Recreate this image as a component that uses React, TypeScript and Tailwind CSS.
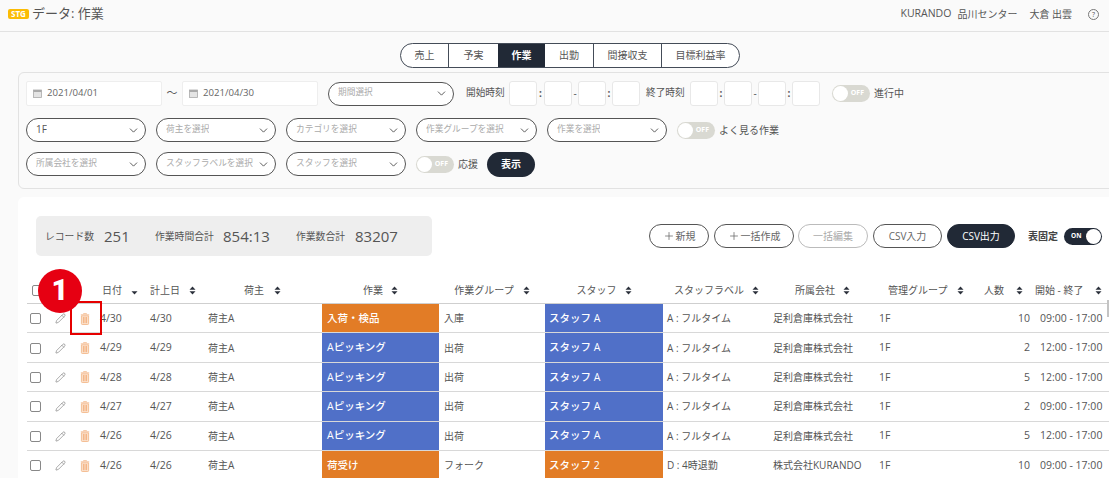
import React from "react";
import { Pencil, ChevronDown, Plus } from "lucide-react";

const Chev = () => <ChevronDown size={13} strokeWidth={1.6} className="text-[#444] shrink-0" />;

function Select({ label, w, dark, className = "" }: { label: string; w: string; dark?: boolean; className?: string }) {
  return (
    <div className={`${w} h-[24px] rounded-full border border-[#555] bg-white flex items-center justify-between pl-[9px] pr-[5px] ${dark ? "text-[10px] text-[#555]" : "text-[8.7px] text-[#aaa]"} ${className}`}>
      <span className="truncate pb-[1px]">{label}</span>
      <Chev />
    </div>
  );
}

function Toggle({ on, className = "" }: { on?: boolean; className?: string }) {
  return on ? (
    <div className={`w-[38px] h-[17px] rounded-full bg-[#212936] flex items-center justify-between pl-[7px] pr-[1px] ${className}`}>
      <span className="text-[6.5px] font-bold text-white">ON</span>
      <span className="w-[15px] h-[15px] rounded-full bg-white" />
    </div>
  ) : (
    <div className={`w-[38px] h-[17px] rounded-full bg-[#d9d9d2] flex items-center justify-between pl-[1px] pr-[6px] ${className}`}>
      <span className="w-[15px] h-[15px] rounded-full bg-white" />
      <span className="text-[7px] font-bold text-white">OFF</span>
    </div>
  );
}

const Cal = () => (
  <svg width="9" height="9" viewBox="0 0 9 9" className="shrink-0">
    <rect x="0.5" y="1" width="8" height="7.5" fill="#e4e4e4" stroke="#aaa" strokeWidth="0.8" />
    <rect x="0.5" y="1" width="8" height="2" fill="#aaa" />
  </svg>
);

function DateBox({ v, w = "w-[136px]" }: { v: string; w?: string }) {
  return (
    <div className={`${w} h-[25px] rounded-[2px] border border-[#eee] bg-white flex items-center gap-[5px] pl-[6px] text-[9.6px] text-[#666]`}>
      <Cal />
      {v}
    </div>
  );
}

const TimeBox = ({ w = "w-[28px]" }: { w?: string }) => <div className={`${w} h-[25px] rounded-[3px] border border-[#e8e8e8] bg-white`} />;

const Sort = ({ downOnly }: { downOnly?: boolean }) => (
  <svg width="7" height="9" viewBox="0 0 7 9" className="inline-block shrink-0">
    {!downOnly && <path d="M3.5 0.5 L6.5 3.8 H0.5 Z" fill="#2a2f3a" />}
    <path d="M3.5 8.5 L6.5 5.2 H0.5 Z" fill="#2a2f3a" />
  </svg>
);

const Trash = () => (
  <svg width="10" height="12" viewBox="0 0 10 12" className="inline-block">
    <path d="M3.5 1.2 V0.6 H6.5 V1.2 M0.8 1.8 H9.2" stroke="#f4bd94" strokeWidth="0.9" fill="none" />
    <path d="M1.4 2.8 H8.6 V10.6 Q8.6 11.5 7.7 11.5 H2.3 Q1.4 11.5 1.4 10.6 Z" fill="#fbe4d2" stroke="#f3b27f" strokeWidth="0.8" />
    <path d="M3.4 4 V10.2 M5 4 V10.2 M6.6 4 V10.2" stroke="#f2ac76" strokeWidth="0.9" />
  </svg>
);

const Btn = ({ children, w, muted, dark, className = "" }: { children: React.ReactNode; w: string; muted?: boolean; dark?: boolean; className?: string }) => (
  <div className={`${w} h-[24px] rounded-full border flex items-center justify-center text-[10px] ${dark ? "bg-[#212936] border-[#212936] text-white" : muted ? "bg-white border-[#bbb] text-[#aaa]" : "bg-white border-[#555] text-[#666]"} ${className}`}>
    {children}
  </div>
);

const tabs = [
  ["売上", "w-[48px]"],
  ["予実", "w-[49px]"],
  ["作業", "w-[47px]"],
  ["出勤", "w-[49px]"],
  ["間接収支", "w-[68px]"],
  ["目標利益率", "w-[77px]"],
];

const BLUE = "bg-[#5070c8]";
const ORANGE = "bg-[#e27c26]";

const rows = [
  ["4/30", "入荷・検品", ORANGE, "入庫", "スタッフ A", BLUE, "A : フルタイム", "足利倉庫株式会社", "10", "09:00 - 17:00"],
  ["4/29", "Aピッキング", BLUE, "出荷", "スタッフ A", BLUE, "A : フルタイム", "足利倉庫株式会社", "2", "12:00 - 17:00"],
  ["4/28", "Aピッキング", BLUE, "出荷", "スタッフ A", BLUE, "A : フルタイム", "足利倉庫株式会社", "5", "12:00 - 17:00"],
  ["4/27", "Aピッキング", BLUE, "出荷", "スタッフ A", BLUE, "A : フルタイム", "足利倉庫株式会社", "2", "09:00 - 17:00"],
  ["4/26", "Aピッキング", BLUE, "出荷", "スタッフ A", BLUE, "A : フルタイム", "足利倉庫株式会社", "5", "12:00 - 17:00"],
  ["4/26", "荷受け", ORANGE, "フォーク", "スタッフ 2", ORANGE, "D : 4時退勤", "株式会社KURANDO", "10", "09:00 - 17:00"],
];

const headers: [string, number, string][] = [
  ["日付", 49, "pl-[6px] gap-[9px]"],
  ["計上日", 59, "pl-[5px] gap-[9px]"],
  ["荷主", 118, "pl-[40px] gap-[10px]"],
  ["作業", 117, "justify-center gap-[8px]"],
  ["作業グループ", 106, "justify-center gap-[9px]"],
  ["スタッフ", 118, "justify-center gap-[8px]"],
  ["スタッフラベル", 107, "justify-center gap-[8px]"],
  ["所属会社", 105, "justify-center gap-[8px]"],
  ["管理グループ", 85, "pl-[13px] gap-[10px]"],
  ["人数", 70, "pl-[24px] gap-[12px]"],
  ["開始 - 終了", 80, "pl-[5px] gap-[12px]"],
];

export default function App() {
  return (
    <div className="relative w-[1109px] h-[478px] overflow-hidden bg-[#fafafa] text-[#555] font-['Open_Sans','Noto_Sans_CJK_JP',sans-serif]">
      {/* top bar */}
      <header className="h-[32px] border-b border-[#e2e2e2] flex items-center pl-[8px] pr-[10px] pb-[3px]">
        <span className="w-[21px] h-[10px] rounded-[2px] bg-[#fbbc05] text-white text-[8px] font-bold flex items-center justify-center leading-none">STG</span>
        <span className="ml-[3px] text-[13px] text-[#555]">データ: 作業</span>
        <div className="ml-auto flex items-center text-[10px] text-[#555]">
          <span className="text-[10.5px]">KURANDO</span>
          <span className="ml-[6px]">品川センター</span>
          <span className="ml-[12px]">大倉 出雲</span>
          <span className="ml-[16px] w-[11px] h-[11px] rounded-full border border-[#777] text-[7px] flex items-center justify-center leading-none">?</span>
        </div>
      </header>

      {/* tabs */}
      <div className="h-[40px] pt-[9px] pl-[400px]">
        <div className="inline-flex h-[25px] rounded-full border border-[#444c58] bg-white overflow-hidden">
          {tabs.map(([t, w], i) => (
            <div key={t} className={`${w} flex items-center justify-center text-[10px] ${i === 2 ? "bg-[#212936] text-white font-bold" : "text-[#555]"} ${i < 5 && i !== 1 && i !== 2 ? "border-r border-[#444c58]" : ""}`}>
              {t}
            </div>
          ))}
        </div>
      </div>

      {/* filter panel */}
      <section className="ml-[18px] w-[1110px] h-[117px] rounded-[6px] border border-[#e2e2e2] pl-[7px] pt-[8px]">
        <div className="flex items-center h-[25px]">
          <DateBox v="2021/04/01" />
          <span className="w-[20px] text-center text-[11px]">〜</span>
          <DateBox v="2021/04/30" />
          <Select label="期間選択" w="w-[126px]" className="ml-[10px]" />
          <span className="ml-[12px] w-[43px] text-[9.7px]">開始時刻</span>
          <TimeBox />
          <span className="w-[7px] text-center text-[10px] font-bold">:</span>
          <TimeBox />
          <span className="w-[6px] text-center text-[10px]">-</span>
          <TimeBox />
          <span className="w-[6px] text-center text-[10px] font-bold">:</span>
          <TimeBox />
          <span className="ml-[6px] w-[44px] text-[9.7px]">終了時刻</span>
          <TimeBox />
          <span className="w-[6px] text-center text-[10px] font-bold">:</span>
          <TimeBox />
          <span className="w-[6px] text-center text-[10px]">-</span>
          <TimeBox />
          <span className="w-[6px] text-center text-[10px] font-bold">:</span>
          <TimeBox />
          <Toggle className="ml-[12px]" />
          <span className="ml-[4px] text-[10px]">進行中</span>
        </div>
        <div className="flex items-center h-[24px] mt-[12px] gap-[10px]">
          <Select label="1F" w="w-[120px]" dark />
          <Select label="荷主を選択" w="w-[120px]" />
          <Select label="カテゴリを選択" w="w-[120px]" />
          <Select label="作業グループを選択" w="w-[121px]" />
          <Select label="作業を選択" w="w-[120px]" />
          <div className="flex items-center gap-[4px]">
            <Toggle />
            <span className="text-[10px]">よく見る作業</span>
          </div>
        </div>
        <div className="flex items-center h-[24px] mt-[10px] gap-[10px]">
          <Select label="所属会社を選択" w="w-[120px]" />
          <Select label="スタッフラベルを選択" w="w-[120px]" />
          <Select label="スタッフを選択" w="w-[120px]" />
          <div className="flex items-center gap-[4px]">
            <Toggle />
            <span className="text-[10px]">応援</span>
          </div>
          <div className="ml-[-1px] w-[48px] h-[25px] rounded-full bg-[#212936] text-white text-[10px] font-bold flex items-center justify-center">表示</div>
        </div>
      </section>

      {/* main card */}
      <section className="ml-[18px] mt-[8px] w-[1110px] h-[300px] bg-white rounded-t-[6px] pt-[19px]">
        <div className="flex items-start pl-[18px]">
          <div className="w-[396px] h-[40px] rounded-[5px] bg-[#eeeeee] flex items-center pl-[9px] text-[#555]">
            <span className="text-[9.8px] w-[59px] pt-[2px]">レコード数</span>
            <span className="text-[15px] w-[51px]">251</span>
            <span className="text-[9.8px] w-[68px] pt-[2px]">作業時間合計</span>
            <span className="text-[15px] w-[73px]">854:13</span>
            <span className="text-[9.8px] w-[59px] pt-[2px]">作業数合計</span>
            <span className="text-[15px]">83207</span>
          </div>
          <div className="ml-[217px] mt-[8px] flex items-center">
            <Btn w="w-[60px]"><Plus size={12} strokeWidth={1.5} className="mr-[1px]" />新規</Btn>
            <Btn w="w-[80px]" className="ml-[5px]"><Plus size={12} strokeWidth={1.5} className="mr-[1px]" />一括作成</Btn>
            <Btn w="w-[70px]" muted className="ml-[4px]">一括編集</Btn>
            <Btn w="w-[69px]" className="ml-[5px]">CSV入力</Btn>
            <Btn w="w-[68px]" dark className="ml-[5px]">CSV出力</Btn>
            <span className="ml-[13px] text-[10px] font-bold text-[#444] w-[36px]">表固定</span>
            <Toggle on />
          </div>
        </div>

        {/* table */}
        <div className="ml-[9px] mt-[22px] text-[10.5px] text-[#555]">
          <div className="flex h-[26px] border-b border-[#cfcfcf]">
            <div className="w-[18px] flex items-center pl-[5px]">
              <span className="w-[11px] h-[11px] rounded-[2px] border border-[#888] bg-white" />
            </div>
            <div className="w-[51px]" />
            {headers.map(([h, w, cls], i) => (
              <div key={h} style={{ width: w }} className={`shrink-0 flex items-center ${cls}`}>
                <span className="text-[10px] whitespace-nowrap">{h}</span>
                <Sort downOnly={i === 0} />
              </div>
            ))}
          </div>
          {rows.map((r, idx) => (
            <div key={idx} className="flex h-[29.4px] border-b border-[#d8d8d8] items-stretch [&>div]:pt-[1px]">
              <div className="w-[18px] flex items-center pl-[3px]">
                <span className="w-[11px] h-[11px] rounded-[2px] border border-[#888] bg-white" />
              </div>
              <div className="w-[27px] flex items-center justify-center pl-[3px]">
                <Pencil size={11} strokeWidth={1.2} className="text-[#666]" />
              </div>
              <div className="w-[24px] flex items-center justify-center pl-[2px]">
                <Trash />
              </div>
              <div className="w-[49px] flex items-center pl-[4px]">{r[0]}</div>
              <div className="w-[59px] flex items-center pl-[5px]">{r[0]}</div>
              <div className="w-[118px] flex items-center pl-[4px] text-[10px]">荷主A</div>
              <div className={`w-[117px] flex items-center pl-[5px] text-white font-medium text-[10.5px] ${r[2]}`}>{r[1]}</div>
              <div className="w-[106px] flex items-center pl-[5px] text-[10px]">{r[3]}</div>
              <div className={`w-[118px] flex items-center pl-[4px] text-white font-medium text-[10.5px] ${r[5]}`}>{r[4]}</div>
              <div className="w-[107px] flex items-center pl-[4px] text-[10px]">{r[6]}</div>
              <div className="w-[105px] flex items-center pl-[3px] text-[10px]">{r[7]}</div>
              <div className="w-[85px] flex items-center pl-[4px]">1F</div>
              <div className="w-[70px] flex items-center justify-end">{r[8]}</div>
              <div className="w-[80px] flex items-center pl-[10px] whitespace-nowrap">{r[9]}</div>
            </div>
          ))}
        </div>
      </section>

      {/* scrollbar thumb */}
      <div className="absolute left-[1107px] top-[300px] w-[2px] h-[17px] bg-[#c4c4c4]" />

      {/* annotation */}
      <div className="absolute left-[70px] top-[301px] w-[32px] h-[34px] border-2 border-[#e60000]" />
      <div className="absolute left-[38px] top-[269px] w-[44px] h-[44px] rounded-full bg-[#e60012] text-white text-[29px] font-black flex items-center justify-center font-['Roboto',sans-serif]">1</div>
    </div>
  );
}
